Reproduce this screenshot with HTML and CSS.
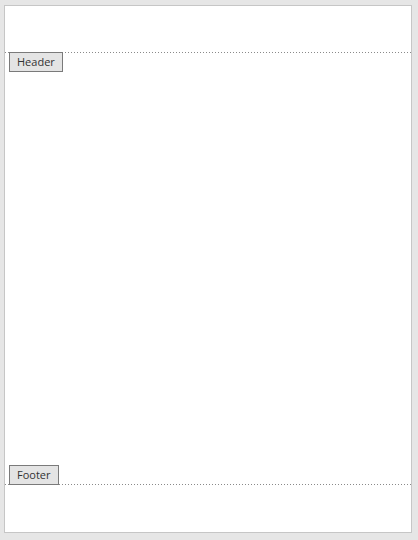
FILE: index.html
```html
<!DOCTYPE html>
<html lang="en">
<head>
    <meta charset="UTF-8">
    <meta name="viewport" content="width=device-width, initial-scale=1.0">
    <title>Page layout</title>
    <link rel="stylesheet" href="styles.css">
</head>
<body>
    <div class="page">
        <div class="header-zone">
            <span class="zone-tab tab-header">Header</span>
        </div>
        <div class="body-zone"></div>
        <div class="footer-zone">
            <span class="zone-tab tab-footer">Footer</span>
        </div>
    </div>
</body>
</html>
```
FILE: styles.css
```css
html, body {
    margin: 0;
    padding: 0;
}

body {
    background-color: #e6e6e6;
    font-family: "Open Sans", "DejaVu Sans", sans-serif;
    padding: 5px 6px 7px 4px;
}

.page {
    display: flex;
    flex-direction: column;
    height: 526px;
    background-color: #fff;
    border: 1px solid #c6c6c6;
}

/* dotted guide lines: 1px dot, 2px gap */
.header-zone,
.footer-zone {
    position: relative;
    background-image: repeating-linear-gradient(to right, #8a8a8a 0 1px, transparent 1px 3px);
    background-repeat: no-repeat;
    background-size: 100% 1px;
}

.header-zone {
    height: 47px;
    background-position: left bottom;
}

.body-zone {
    flex: 1;
}

.footer-zone {
    height: 48px;
    background-position: left top;
}

.zone-tab {
    position: absolute;
    left: 4px;
    box-sizing: border-box;
    height: 20px;
    padding: 0 7px;
    line-height: 18px;
    font-size: 11px;
    color: #333;
    background-color: #e4e4e4;
    border: 1px solid #7a7a7a;
}

.tab-header {
    top: 46px;
}

.tab-footer {
    bottom: 47px;
}
```
